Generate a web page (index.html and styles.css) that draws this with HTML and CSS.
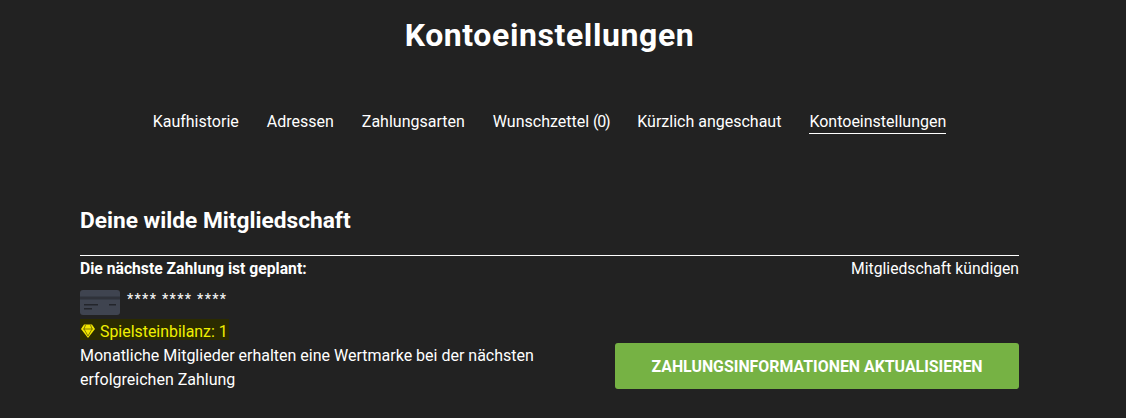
FILE: index.html
```html
<!DOCTYPE html>
<html lang="de">
<head>
<meta charset="utf-8">
<title>Kontoeinstellungen</title>
<link rel="stylesheet" href="styles.css">
</head>
<body>
<h1 class="title">Kontoeinstellungen</h1>
<nav class="tabs">
  <a class="tab">Kaufhistorie</a>
  <a class="tab">Adressen</a>
  <a class="tab">Zahlungsarten</a>
  <a class="tab">Wunschzettel <span class="count">(0)</span></a>
  <a class="tab">Kürzlich angeschaut</a>
  <a class="tab active">Kontoeinstellungen</a>
</nav>
<main class="section">
  <h2 class="heading">Deine wilde Mitgliedschaft</h2>
  <div class="head-row">
    <strong class="next">Die nächste Zahlung ist geplant:</strong>
    <a class="cancel">Mitgliedschaft kündigen</a>
  </div>
  <div class="card-row">
    <svg class="card" width="40" height="25" viewBox="0 0 40 25">
      <rect width="40" height="25" rx="3" fill="#3f4450"/>
      <path d="M0 6.500h40v3H0z" fill="#2f323a"/>
      <path d="M4 14h14v1.600H4zM4 18h8v1.600H4zM29 14h7v1.600h-7z" fill="#23252b"/>
    </svg>
    <span class="mask">**** **** ****</span>
  </div>
  <div class="bottom">
    <div class="info">
      <div class="gems">
        <svg class="gem" width="14" height="14" viewBox="0 0 14 14">
          <path d="M3 .5h8L14 5 7 14 0 5z" fill="#f2e600"/>
          <path d="M2 5h10M4.500 1 3 5l4 7 4-7-1.500-4" fill="none" stroke="#6a6400" stroke-width=".8"/>
        </svg>
        <span class="gem-label">Spielsteinbilanz: 1</span>
      </div>
      <p class="note">Monatliche Mitglieder erhalten eine Wertmarke bei der nächsten erfolgreichen Zahlung</p>
    </div>
    <button class="update">ZAHLUNGSINFORMATIONEN AKTUALISIEREN</button>
  </div>
</main>
</body>
</html>
```
FILE: styles.css
```css
* { box-sizing: border-box; }
html, body { height: 100%; }
body {
  margin: 0;
  padding: 0 107px 0 80px;
  background: #222222;
  color: #fff;
  font-family: Roboto, "Liberation Sans", sans-serif;
  font-size: 16px;
  overflow: hidden;
}
.title {
  margin: 0;
  padding-top: 15px;
  height: 104px;
  text-align: center;
  font-size: 32px;
  line-height: 40px;
  font-weight: 700;
  letter-spacing: 0.6px;
}
.tabs {
  display: flex;
  justify-content: center;
  gap: 28px;
  height: 31px;
}
.tab {
  height: 30px;
  line-height: 36px;
  font-size: 16px;
}
.tab.active { border-bottom: 1px solid #fff; }
.count { letter-spacing: -1.300px; }
.section {
  padding-top: 72px;
}
.heading {
  margin: 0;
  height: 49px;
  line-height: 28px;
  font-size: 22.700px;
  font-weight: 700;
  border-bottom: 1px solid #fff;
}
.head-row {
  display: flex;
  justify-content: space-between;
  height: 26px;
  line-height: 26px;
  font-size: 15.700px;
}
.next { font-weight: 700; }
.card-row {
  display: flex;
  gap: 7px;
  height: 37px;
  padding-top: 8px;
}
.card { display: block; flex: none; }
.mask { font-size: 14px; line-height: 18px; letter-spacing: 1.350px; font-weight: 500; color: #f3f3f3; }
.bottom {
  display: flex;
  justify-content: space-between;
  align-items: flex-end;
}
.info { width: 480px; }
.gems {
  display: flex;
  align-items: center;
  gap: 5px;
  width: fit-content;
  height: 21px;
  margin-bottom: 4px;
  padding: 3px 1px 0;
  background: #2b2b00;
  color: #f0f000;
  font-size: 15.900px;
}
.gem { display: block; flex: none; }
.note {
  margin: 0;
  font-size: 16px;
  line-height: 24px;
}
.update {
  width: 404px;
  height: 46px;
  margin-bottom: 3px;
  border: 0;
  border-radius: 3px;
  background: #76b244;
  color: #fff;
  font-family: inherit;
  font-size: 15.900px;
  font-weight: 700;
}
```
